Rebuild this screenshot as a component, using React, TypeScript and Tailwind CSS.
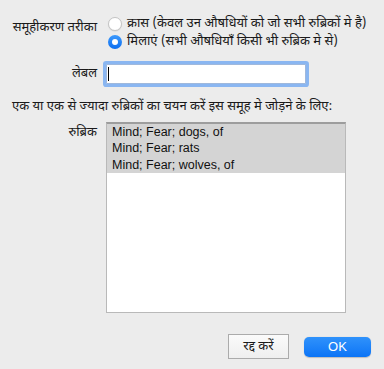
import React from "react";

const font = { fontFamily: '"Noto Sans Devanagari", "Noto Sans", "Liberation Sans", sans-serif' };

function Radio({ checked }: { checked?: boolean }) {
  if (checked) {
    return (
      <span className="w-[14px] h-[14px] rounded-full bg-gradient-to-b from-[#3b99fc] to-[#0a6ef0] flex items-center justify-center shrink-0">
        <span className="w-[6px] h-[6px] rounded-full bg-white" />
      </span>
    );
  }
  return (
    <span className="w-[14px] h-[14px] rounded-full bg-white border border-[#c4c4c4] shadow-[0_0.5px_1px_rgba(0,0,0,0.1)] shrink-0" />
  );
}

export default function App() {
  const rows = ["Mind; Fear; dogs, of", "Mind; Fear; rats", "Mind; Fear; wolves, of"];
  return (
    <div className="w-[384px] h-[369px] bg-[#ececec] text-[13px] text-[#1a1a1a] flex flex-col overflow-hidden" style={font}>
      <div className="flex mt-[15px]">
        <div className="w-[97px] text-right pt-[4px] leading-[18px] shrink-0">समूहीकरण तरीका</div>
        <div className="ml-[11px] flex flex-col">
          <div className="h-[18px] flex items-center">
            <Radio />
            <span className="ml-[5px] leading-[18px] whitespace-nowrap">क्रास (केवल उन औषधियों को जो सभी रुब्रिकों मे है)</span>
          </div>
          <div className="h-[18px] flex items-center">
            <Radio checked />
            <span className="ml-[5px] leading-[18px] whitespace-nowrap">मिलाएं (सभी औषधियाँ किसी भी रुब्रिक मे से)</span>
          </div>
        </div>
      </div>

      <div className="flex items-center mt-[13px]">
        <div className="w-[97px] text-right leading-[18px] shrink-0">लेबल</div>
        <div className="ml-[9px] w-[200px] h-[20px] bg-white border border-[#9fb8dc] rounded-[1px] ring-[3px] ring-[#8ab6f1] flex items-center pl-[1px]">
          <span className="w-[1px] h-[14px] bg-black" />
        </div>
      </div>

      <div className="mt-[14px] px-[12px] h-[18px] leading-[18px] whitespace-nowrap">
        एक या एक से ज्यादा रुब्रिकों का चयन करें इस समूह मे जोड़ने के लिए:
      </div>

      <div className="flex mt-[6px]">
        <div className="w-[97px] text-right leading-[18px] pt-[2px] shrink-0">रुब्रिक</div>
        <div className="ml-[9px] w-[240px] h-[191px] bg-white border border-[#b9b9b9] border-t-[2px] border-t-[#9d9d9d] flex flex-col">
          {rows.map((r) => (
            <div
              key={r}
              className="h-[16.4px] bg-[#d4d4d4] pl-[5px] flex items-center text-[12.5px] text-[#111]"
              style={{ fontFamily: '"Liberation Sans", Arial, sans-serif' }}
            >
              {r}
            </div>
          ))}
        </div>
      </div>

      <div className="flex justify-end items-center mt-[21px] pr-[13px]">
        <button className="w-[61px] h-[25px] border border-[#ababab] bg-gradient-to-b from-[#fafafa] to-[#efefef] text-[13px] text-[#1a1a1a] flex items-center justify-center">
          रद्द करें
        </button>
        <button
          className="ml-[15px] w-[67px] h-[20px] rounded-[5px] bg-gradient-to-b from-[#2f92fb] to-[#0a74f6] text-white text-[13px] flex items-center justify-center shadow-[0_0.5px_1px_rgba(0,0,0,0.2)]"
          style={{ fontFamily: '"Liberation Sans", Arial, sans-serif' }}
        >
          OK
        </button>
      </div>
    </div>
  );
}
